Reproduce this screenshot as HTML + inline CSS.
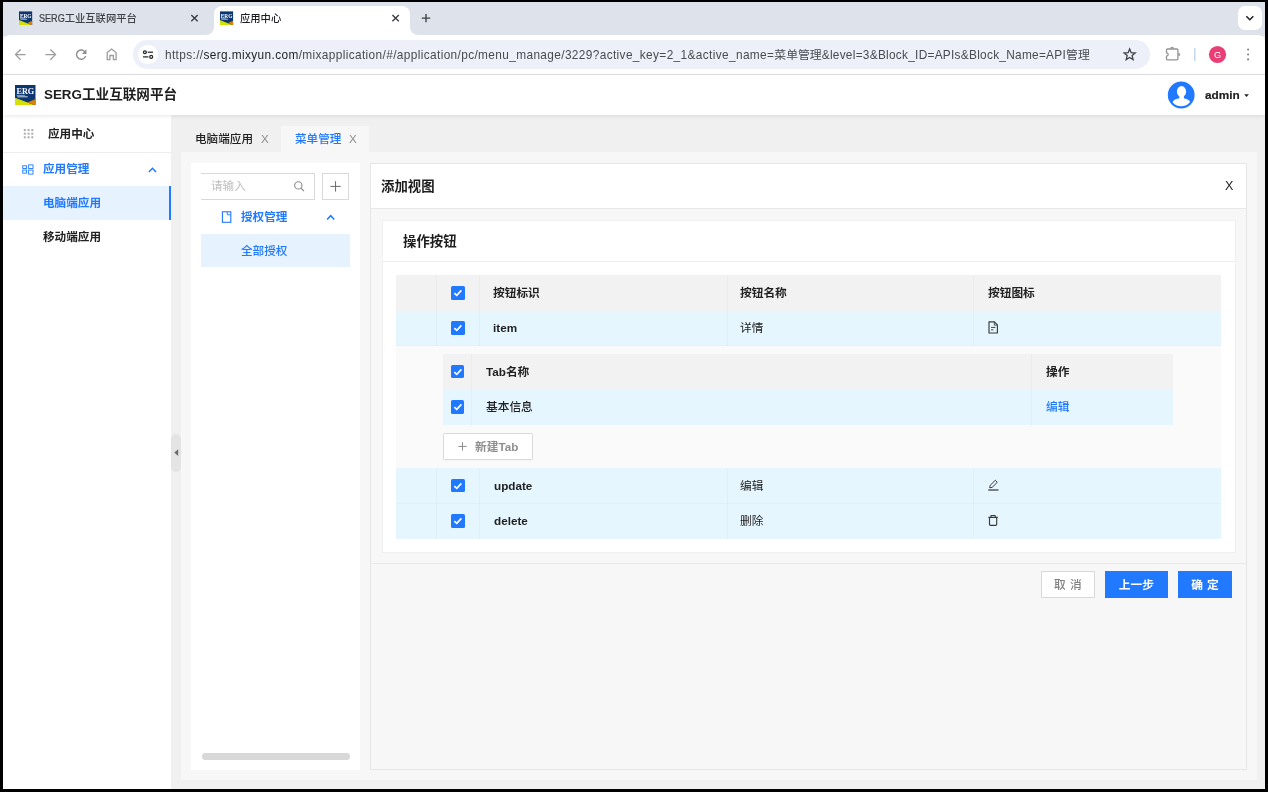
<!DOCTYPE html>
<html lang="zh"><head>
<meta charset="utf-8">
<title>应用中心</title>
<style>
html,body{margin:0;padding:0;}
body{width:1268px;height:792px;overflow:hidden;background:#000;font-family:"Liberation Sans","Noto Sans CJK SC",sans-serif;color:#222;position:relative;-webkit-font-smoothing:antialiased;}
.a{position:absolute;white-space:nowrap;}
.t{position:absolute;white-space:nowrap;line-height:20px;height:20px;will-change:transform;}
.b{font-weight:bold;}
svg{position:absolute;overflow:visible;}
#win{left:3.1px;top:2.4px;width:1262.1px;height:786.2px;background:#f0f0f0;overflow:hidden;}
/* chrome */
#strip{left:0;top:0;width:1268px;height:36px;background:#dee2ea;}
#tab2{left:213.5px;top:6.4px;width:196px;height:29px;background:#fff;border-radius:8px 8px 0 0;}
.curl{width:8px;height:8px;top:26.7px;background:#fff;}
.curl i{display:block;width:8px;height:8px;background:#dee2ea;}
#toolbar{left:3.1px;top:34.7px;width:1262.1px;height:39.5px;background:#fff;border-radius:7px 7px 0 0;}
#tbline{left:3.1px;top:73.7px;width:1262.1px;height:1px;background:#e0e2e6;}
#pill{left:133.4px;top:40.4px;width:1016.6px;height:28.4px;border-radius:14.2px;background:#edf0f8;}
#infoc{left:138.3px;top:44.9px;width:19.4px;height:19.4px;border-radius:50%;background:#fff;}
#tsearch{left:1238px;top:6.4px;width:23.6px;height:23.6px;border-radius:7px;background:#fff;}
/* app */
#hdr{left:3.1px;top:74.8px;width:1262.1px;height:40.4px;background:#fff;box-shadow:0 1px 4px rgba(0,21,41,.10);}
#side{left:3.1px;top:115.2px;width:168px;height:673.4px;background:#fff;}
#sel1{left:3.1px;top:186.3px;width:168px;height:33.6px;background:#e7f2ff;}
#sel1bar{left:168.6px;top:186.3px;width:2.5px;height:33.6px;background:#2079ff;}
#sdiv{left:3.1px;top:152px;width:168px;height:1px;background:#ececec;}
.blue{color:#2079ff;}
</style>
</head>
<body>

<div id="win" class="a"></div>

<!-- ===== browser chrome ===== -->
<div id="strip" class="a" style="left:3.1px;top:2.4px;width:1262.1px;height:34px;"></div>
<div id="tab2" class="a"></div>
<div class="a curl" style="left:205.5px;"><i style="border-radius:0 0 8px 0;"></i></div>
<div class="a curl" style="left:409.5px;"><i style="border-radius:0 0 0 8px;"></i></div>
<div id="tsearch" class="a"></div>
<div id="toolbar" class="a"></div>
<div id="tbline" class="a"></div>
<div id="pill" class="a"></div>
<div id="infoc" class="a"></div>

<div class="t" id="tt1" style="left:39.2px;top:9px;font-size:10.3px;color:#3f4246;font-weight:500;"><span style="display:inline-block;font-size:10.1px;transform:scaleX(.9);transform-origin:0 50%;margin-right:-2.9px;-webkit-text-stroke:0.2px #3f4246;">SERG</span>工业互联网平台</div>
<div class="t" id="tt2" style="left:240.3px;top:9px;font-size:10.3px;color:#1b1d20;font-weight:500;">应用中心</div>
<div class="t" id="url" style="left:165.3px;top:44.7px;font-size:11.85px;color:#484b50;letter-spacing:0.372px;">https://<span style="color:#1f2023;">serg.mixyun.com</span>/mixapplication/#/application/pc/menu_manage/3229?active_key=2_1&amp;active_name=<span style="letter-spacing:0;">菜单管理</span><span style="letter-spacing:0.278px;">&amp;level=3&amp;Block_ID=APIs&amp;Block_Name=API</span><span style="letter-spacing:0;">管理</span></div>

<!-- ===== app header ===== -->
<div id="side" class="a"></div>
<div id="hdr" class="a"></div>
<div class="t b" id="apptitle" style="left:44.4px;top:85.3px;font-size:13.6px;color:#1d1d1d;"><span style="font-size:13.4px;">SERG</span>工业互联网平台</div>
<div class="t b" id="admin" style="left:1204.8px;top:85px;font-size:11.8px;-webkit-text-stroke:0.2px #1d1d1d;color:#1d1d1d;">admin</div>

<!-- ===== sidebar ===== -->
<div id="sdiv" class="a"></div>
<div id="sel1" class="a"></div>
<div id="sel1bar" class="a"></div>
<div class="t b" style="left:48px;top:123.5px;font-size:11.6px;color:#222;">应用中心</div>
<div class="t b blue" style="left:42.7px;top:159px;font-size:11.6px;">应用管理</div>
<div class="t b blue" style="left:43.2px;top:193.1px;font-size:11.6px;">电脑端应用</div>
<div class="t b" style="left:43.2px;top:226.7px;font-size:11.6px;color:#222;">移动端应用</div>


<!-- ===== main area ===== -->
<style>
#content{left:181px;top:152.4px;width:1075.6px;height:628px;background:#f7f7f7;}
#atab{left:281px;top:125.6px;width:87.5px;height:27px;background:#f7f7f7;}
#lp{left:191.2px;top:162.7px;width:169.1px;height:607.2px;background:#fff;}
#search{left:201.1px;top:173.1px;width:113.1px;height:25.1px;border:1px solid #d9d9d9;border-left:none;background:#fff;}
#plus{left:322.2px;top:173.1px;width:24.8px;height:25.1px;border:1px solid #d9d9d9;background:#fff;}
#sel2{left:201.1px;top:233.8px;width:148.8px;height:33.5px;background:#e7f2ff;}
#sbar{left:202.1px;top:753.4px;width:148px;height:6.6px;border-radius:3.3px;background:#d8d8d8;}
#handle{left:171.1px;top:433.6px;width:9.7px;height:38.7px;border-radius:4.85px;background:#e4e4e4;}
#rp{left:369.9px;top:163.1px;width:874.8px;height:605.2px;border:1px solid #e6e6e6;background:#f7f7f7;}
#rph{left:370.9px;top:164.1px;width:874.8px;height:44px;background:#fff;border-bottom:1px solid #e8e8e8;}
#rpf{left:370.9px;top:563.2px;width:874.8px;height:1px;background:#e8e8e8;}
#card{left:381.5px;top:219.8px;width:852.5px;height:331.2px;background:#fff;border:1px solid #f0f0f0;}
#cardh{left:382.5px;top:261.3px;width:852.5px;height:1px;background:#eee;}
.row{left:396.2px;width:824.9px;}
.hd{background:#f2f2f2;}
.sl{background:#e6f6ff;}
.vl{width:1px;background:rgba(0,0,0,.028);}
.cb{width:13.6px;height:13.6px;border-radius:1.6px;background:#2079ff;}
.cb svg{left:0;top:0;}
.btn{word-spacing:1px;will-change:transform;height:26.6px;line-height:27.6px;text-align:center;font-size:11.7px;}
</style>
<div id="content" class="a"></div>
<div id="atab" class="a"></div>
<div id="handle" class="a"></div>
<div class="t" style="left:195.3px;top:129px;font-size:11.6px;color:#222;font-weight:500;">电脑端应用</div>
<div class="t" style="left:261.4px;top:129.4px;font-size:11.6px;color:#8c8c8c;">X</div>
<div class="t blue" style="left:294.5px;top:129px;font-size:11.6px;font-weight:500;">菜单管理</div>
<div class="t" style="left:349.4px;top:129.4px;font-size:11.6px;color:#8c8c8c;">X</div>

<div id="lp" class="a"></div>
<div id="search" class="a"></div>
<div id="plus" class="a"></div>
<div class="t" style="left:211.2px;top:176.3px;font-size:11.6px;color:#bfbfbf;">请输入</div>
<div class="t b blue" style="left:241.3px;top:206.7px;font-size:11.6px;">授权管理</div>
<div id="sel2" class="a"></div>
<div class="t blue" style="left:241.3px;top:240.5px;font-size:11.6px;font-weight:500;">全部授权</div>
<div id="sbar" class="a"></div>

<div id="rp" class="a"></div>
<div id="rph" class="a"></div>
<div id="rpf" class="a"></div>
<div class="t b" style="left:380.9px;top:176.5px;font-size:13.4px;color:#1d1d1d;">添加视图</div>
<div class="t" style="left:1225px;top:176px;font-size:12.6px;color:#222;">X</div>
<div id="card" class="a"></div>
<div id="cardh" class="a"></div>
<div class="t b" style="left:402.5px;top:231.5px;font-size:13.4px;color:#1d1d1d;">操作按钮</div>

<!-- table -->
<div class="a row hd" style="top:275.1px;height:35.6px;"></div>
<div class="a row sl" style="top:310.7px;height:35.1px;"></div>
<div class="a row" style="top:345.8px;height:122.4px;background:#fafafa;"></div>
<div class="a row sl" style="top:468.2px;height:35.2px;"></div>
<div class="a row sl" style="top:503.4px;height:35.2px;"></div>
<div class="a" style="left:396.2px;width:824.9px;top:503px;height:1px;background:#e4eef4;"></div>
<div class="a" style="left:396.2px;width:824.9px;top:345.4px;height:1px;background:#e8eef2;"></div>
<!-- nested -->
<div class="a hd" style="left:443px;width:730.3px;top:354px;height:35.5px;"></div>
<div class="a sl" style="left:443px;width:730.3px;top:389.5px;height:35.1px;"></div>
<div class="a" style="left:443px;top:433.2px;width:87.7px;height:24.4px;border:1px solid #d9d9d9;background:#fff;border-radius:1.5px;box-shadow:0 1px 0 rgba(0,0,0,.02);"></div>
<div class="a vl" style="left:436.3px;top:275.1px;height:70.7px;"></div>
<div class="a vl" style="left:436.3px;top:468.2px;height:70.4px;"></div>
<div class="a vl" style="left:479.1px;top:275.1px;height:70.7px;"></div>
<div class="a vl" style="left:479.1px;top:468.2px;height:70.4px;"></div>
<div class="a vl" style="left:726.5px;top:275.1px;height:70.7px;"></div>
<div class="a vl" style="left:726.5px;top:468.2px;height:70.4px;"></div>
<div class="a vl" style="left:973.3px;top:275.1px;height:70.7px;"></div>
<div class="a vl" style="left:973.3px;top:468.2px;height:70.4px;"></div>
<div class="a vl" style="left:471.3px;top:354px;height:70.6px;"></div>
<div class="a vl" style="left:1031.1px;top:354px;height:70.6px;"></div>
<div class="a cb" style="left:451.2px;top:286.4px;"><svg width="13.6" height="13.6" viewBox="0 0 16 16"><path d="M3.9 8.3 L6.8 11 L12.2 5.2" fill="none" stroke="#fff" stroke-width="1.9" stroke-linecap="butt" stroke-linejoin="miter"></path></svg></div>
<div class="a cb" style="left:451.2px;top:321.3px;"><svg width="13.6" height="13.6" viewBox="0 0 16 16"><path d="M3.9 8.3 L6.8 11 L12.2 5.2" fill="none" stroke="#fff" stroke-width="1.9" stroke-linecap="butt" stroke-linejoin="miter"></path></svg></div>
<div class="a cb" style="left:450.6px;top:364.8px;"><svg width="13.6" height="13.6" viewBox="0 0 16 16"><path d="M3.9 8.3 L6.8 11 L12.2 5.2" fill="none" stroke="#fff" stroke-width="1.9" stroke-linecap="butt" stroke-linejoin="miter"></path></svg></div>
<div class="a cb" style="left:450.6px;top:400.1px;"><svg width="13.6" height="13.6" viewBox="0 0 16 16"><path d="M3.9 8.3 L6.8 11 L12.2 5.2" fill="none" stroke="#fff" stroke-width="1.9" stroke-linecap="butt" stroke-linejoin="miter"></path></svg></div>
<div class="a cb" style="left:451.2px;top:478.9px;"><svg width="13.6" height="13.6" viewBox="0 0 16 16"><path d="M3.9 8.3 L6.8 11 L12.2 5.2" fill="none" stroke="#fff" stroke-width="1.9" stroke-linecap="butt" stroke-linejoin="miter"></path></svg></div>
<div class="a cb" style="left:451.2px;top:514.1px;"><svg width="13.6" height="13.6" viewBox="0 0 16 16"><path d="M3.9 8.3 L6.8 11 L12.2 5.2" fill="none" stroke="#fff" stroke-width="1.9" stroke-linecap="butt" stroke-linejoin="miter"></path></svg></div>
<div class="t b" style="left:493.4px;top:283.2px;font-size:11.7px;">按钮标识</div>
<div class="t b" style="left:740.4px;top:283.2px;font-size:11.7px;">按钮名称</div>
<div class="t b" style="left:988px;top:283.2px;font-size:11.7px;">按钮图标</div>
<div class="t b" style="left:493.4px;top:318.1px;font-size:11.7px;">item</div>
<div class="t " style="left:740.4px;top:318.1px;font-size:11.7px;">详情</div>
<div class="t b" style="left:485.5px;top:361.6px;font-size:11.7px;">Tab名称</div>
<div class="t b" style="left:1046px;top:361.6px;font-size:11.7px;">操作</div>
<div class="t " style="left:485.5px;top:396.9px;font-size:11.7px;font-weight:500;">基本信息</div>
<div class="t blue" style="left:1046px;top:396.9px;font-size:11.7px;font-weight:500;">编辑</div>
<div class="t b" style="left:475.1px;top:436.5px;font-size:11.7px;color:#8f8f8f;">新建Tab</div>
<div class="t b" style="left:493.6px;top:475.7px;font-size:11.7px;">update</div>
<div class="t " style="left:740.4px;top:475.7px;font-size:11.7px;">编辑</div>
<div class="t b" style="left:493.6px;top:510.9px;font-size:11.7px;">delete</div>
<div class="t " style="left:740.4px;top:510.9px;font-size:11.7px;">删除</div>

<div class="a btn" style="left:1041.2px;top:571.3px;width:51.6px;height:24.6px;line-height:25.6px;border:1px solid #d9d9d9;background:#fff;color:#828282;font-weight:500;">取 消</div>
<div class="a btn b" style="left:1105.3px;top:571.3px;width:62.6px;background:#2079ff;color:#fff;">上一步</div>
<div class="a btn b" style="left:1178px;top:571.3px;width:53.9px;background:#2079ff;color:#fff;">确 定</div>


<svg id="ico" width="1268" height="792" viewBox="0 0 1268 792" style="left:0;top:0;will-change:transform;" fill="none" stroke-linecap="butt" stroke-linejoin="miter">
<defs>
<symbol id="logo" viewBox="0 0 100 100" preserveAspectRatio="none">
<rect width="100" height="100" fill="#0b3672"></rect>
<polygon points="0,64 93,100 0,100" fill="#d3df05"></polygon>
<polygon points="100,70 100,100 93,100 61,87" fill="#d9820a"></polygon>
<text x="50" y="47" text-anchor="middle" font-family="Liberation Serif,serif" font-size="46" font-weight="bold" fill="#fff" stroke="none" textLength="86" lengthAdjust="spacingAndGlyphs">ERG</text>
<rect x="8" y="50" width="40" height="3" fill="#dfe6f0" stroke="none"></rect>
<rect x="11" y="56" width="50" height="6" fill="#c9d3e4" stroke="none" opacity=".85"></rect>
</symbol>
</defs>
<!-- favicons + logo -->
<use href="#logo" x="19" y="11.2" width="13.4" height="13.7"></use>
<use href="#logo" x="219.9" y="11.2" width="13.4" height="13.7"></use>
<use href="#logo" x="15" y="84.9" width="20.7" height="20.1"></use>
<!-- tab strip -->
<g stroke="#3a3d42" stroke-width="1.35">
<path d="M191.3 14.9 L197.7 21.3 M197.7 14.9 L191.3 21.3"></path>
<path d="M392.4 14.9 L398.8 21.3 M398.8 14.9 L392.4 21.3"></path>
<path d="M421.8 18.1 H430.2 M426 13.9 V22.3"></path>
</g>
<path d="M1246.3 16.2 L1249.8 19.7 L1253.3 16.2" stroke="#1f1f1f" stroke-width="1.5"></path>
<!-- nav buttons -->
<g stroke="#9c9c9c" stroke-width="1.3">
<path d="M25.6 54.6 H16.2 M20.6 49.5 L15.5 54.6 L20.6 59.7"></path>
<path d="M45.4 54.6 H54.8 M50.4 49.5 L55.5 54.6 L50.4 59.7"></path>
<path d="M107.2 59.7 V52.6 L111.65 49 L116.1 52.6 V59.7 H113.4 V55.5 H109.9 V59.7 Z"></path>
</g>
<g transform="translate(73.25 46.65) scale(0.6625)"><path fill="#8f8f8f" stroke="none" d="M17.65 6.35C16.2 4.9 14.21 4 12 4c-4.42 0-7.99 3.58-7.99 8s3.57 8 7.99 8c3.73 0 6.84-2.55 7.730-6h-2.080c-.82 2.33-3.04 4-5.65 4-3.31 0-6-2.69-6-6s2.690-6 6-6c1.660 0 3.140.69 4.220 1.780L13 11h7V4l-2.350 2.350z"></path></g>
<!-- site info (tune) -->
<g stroke="#26282b" stroke-width="1.25">
<circle cx="144.9" cy="52.2" r="1.45"></circle><path d="M147.7 52.2 H153"></path>
<path d="M143 56.9 H148.4"></path><circle cx="151.2" cy="56.9" r="1.45"></circle>
</g>
<!-- right toolbar -->
<polygon points="1129.65,48.95 1131.18,52.70 1135.21,52.99 1132.12,55.60 1133.09,59.53 1129.65,57.40 1126.21,59.53 1127.18,55.60 1124.09,52.99 1128.12,52.70" stroke="#3f4246" stroke-width="1.3" stroke-linejoin="miter"></polygon>
<path d="M1167.5 49 H1176.9 a1 1 0 0 1 1 1 V58.8 a1 1 0 0 1 -1 1 H1167.5 a1 1 0 0 1 -1 -1 V56.2 q1.7 -0.3 1.7 -1.7 q0 -1.4 -1.7 -1.7 V50 a1 1 0 0 1 1 -1 Z" stroke="#929292" stroke-width="1.3" stroke-linejoin="round"></path><path d="M1170.1 48.7 q0 -1.9 2 -1.9 q2 0 2 1.9 Z M1178.4 52.7 q1.9 0.2 1.9 1.7 q0 1.5 -1.9 1.7 Z" fill="#9a9a9a" stroke="none"></path>
<path d="M1194.8 48 V60.9" stroke="#c4d6f6" stroke-width="1.5"></path>
<circle cx="1217.5" cy="54.5" r="8.6" fill="#e83f76"></circle>
<text x="1217.5" y="57.7" text-anchor="middle" font-family="Liberation Sans,sans-serif" font-size="9.2" fill="#fff" stroke="none">G</text>
<g fill="#858585"><circle cx="1248.1" cy="49.6" r="1.05"></circle><circle cx="1248.1" cy="54.5" r="1.05"></circle><circle cx="1248.1" cy="59.4" r="1.05"></circle></g>
<!-- user avatar -->
<circle cx="1181.2" cy="95" r="13.4" fill="#2079ff"></circle>
<clipPath id="avc"><circle cx="1181.2" cy="95" r="11.3"></circle></clipPath>
<g fill="#fff" clip-path="url(#avc)">
<ellipse cx="1181.5" cy="91.4" rx="4.6" ry="5.3"></ellipse>
<rect x="1179.3" y="94" width="4.6" height="6"></rect>
<ellipse cx="1181.4" cy="103" rx="8.9" ry="4.8"></ellipse>
</g>
<polygon points="1244.2,94.3 1248.9,94.3 1246.55,96.9" fill="#222"></polygon>
<!-- sidebar icons -->
<g fill="#ababab"><rect x="23.8" y="129.1" width="2" height="2"></rect><rect x="27.55" y="129.1" width="2" height="2"></rect><rect x="31.3" y="129.1" width="2" height="2"></rect><rect x="23.8" y="132.7" width="2" height="2"></rect><rect x="27.55" y="132.7" width="2" height="2"></rect><rect x="31.3" y="132.7" width="2" height="2"></rect><rect x="23.8" y="136.3" width="2" height="2"></rect><rect x="27.55" y="136.3" width="2" height="2"></rect><rect x="31.3" y="136.3" width="2" height="2"></rect></g>
<g stroke="#2079ff" stroke-width="0.9">
<rect x="22.7" y="165.8" width="3.9" height="2.7"></rect><rect x="22.7" y="170.1" width="3.9" height="3"></rect>
<rect x="28.6" y="164.9" width="4.4" height="3.6"></rect><rect x="28.6" y="170.1" width="4.4" height="4"></rect>
</g>
<path d="M148.9 172.1 L152.45 168.3 L156 172.1" stroke="#2079ff" stroke-width="1.5"></path>
<!-- left panel icons -->
<g stroke="#8a8a8a" stroke-width="1.1"><circle cx="298.3" cy="185.4" r="3.65"></circle><path d="M300.9 188 L304 191.1"></path></g>
<path d="M330.4 186.4 H340.7 M335.55 181.2 V191.6" stroke="#6a6a6a" stroke-width="1"></path>
<g stroke="#2079ff" stroke-width="1.1"><rect x="222.4" y="211.8" width="8.4" height="10.5"></rect><path d="M227.3 212 V214.8 H230.6" stroke-width="0.9"></path></g>
<path d="M327.1 219.5 L330.7 215.7 L334.3 219.5" stroke="#2079ff" stroke-width="1.5"></path>
<polygon points="178.2,449.2 178.2,456 174.3,452.6" fill="#6a6a6a"></polygon>
<!-- table icons -->
<g stroke="#3a3a3a" stroke-width="1.15" stroke-linejoin="round">
<path d="M989 321.9 H994.5 L997.4 324.9 V333 H989 Z"></path>
<path d="M994.3 322.2 V325.1 H997.2" stroke-width="0.9"></path>
<path d="M991 327.4 H995.4 M991 329.8 H993.4" stroke-width="0.95"></path>
<path d="M988.2 490 H998.5" stroke-width="1.25"></path>
<path d="M990.1 485.4 L995.3 480.3 L997.3 482.3 L992.1 487.4 L989.7 487.8 Z" stroke-width="1"></path>
<path d="M988.4 517.3 H997.8 M991 517.1 V515.5 H995.2 V517.1"></path>
<path d="M989.5 517.5 V524.3 a1 1 0 0 0 1 1 H995.7 a1 1 0 0 0 1 -1 V517.5"></path>
</g>
<path d="M458.4 446.4 H466.6 M462.5 442.3 V450.5" stroke="#8c8c8c" stroke-width="1"></path>
</svg>



</body></html>
